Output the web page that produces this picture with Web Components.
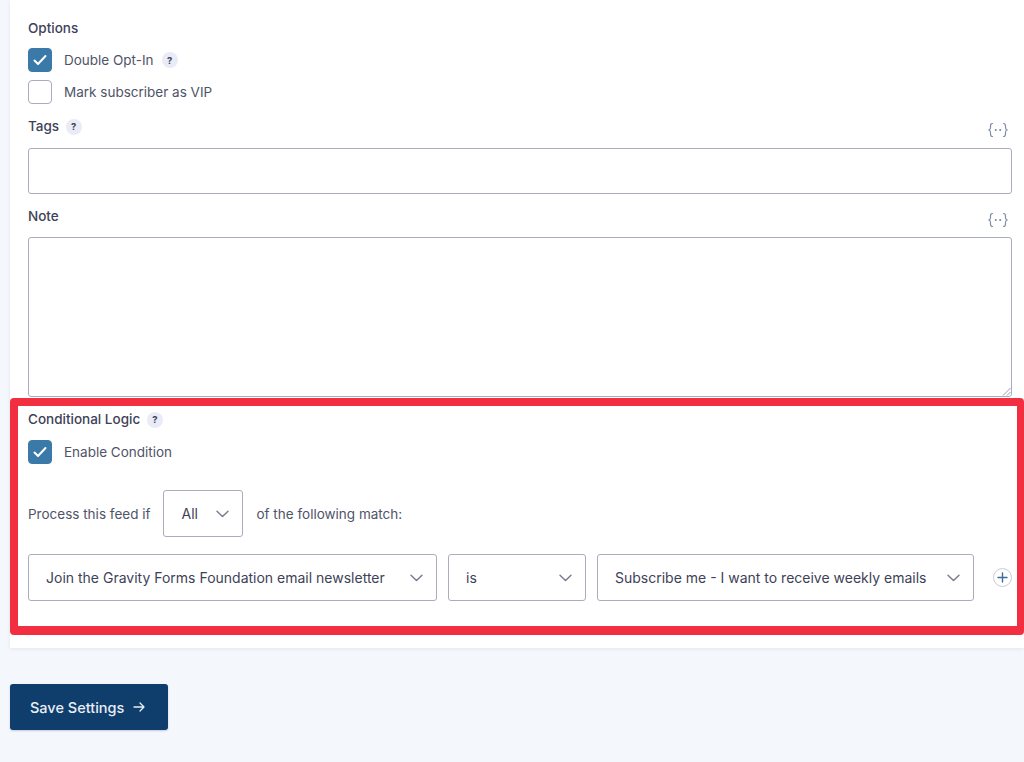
<!DOCTYPE html>
<html lang="en"><head><meta charset="utf-8"><title>Feed settings</title>
<style>
html,body{margin:0;padding:0;background:#f4f7fb;font-family:Inter,"Liberation Sans",sans-serif;color:#242748}
body{width:1024px;height:762px;overflow:hidden}
</style></head><body>
<feed-page>
  <settings-panel>
    <field-label style="height:16px;margin-top:20px">Options</field-label>
    <check-row checked style="margin-top:12px">Double Opt-In <help-dot style="margin-left:4px"></help-dot></check-row>
    <check-row style="margin-top:8px">Mark subscriber as VIP</check-row>
    <field-label merge style="margin-top:14px;height:30px">Tags <help-dot></help-dot></field-label>
    <text-box style="height:46px;margin-top:0"></text-box>
    <field-label merge style="margin-top:14px;height:29px">Note</field-label>
    <text-box resize style="height:160px"></text-box>
    <logic-box>
      <field-label strong>Conditional Logic <help-dot></help-dot></field-label>
      <check-row checked style="margin-top:12px">Enable Condition</check-row>
      <process-row style="margin-top:26px">
        <span>Process this feed if</span>
        <select-box style="width:80px">All</select-box>
        <span>of the following match:</span>
      </process-row>
      <rule-row style="margin-top:17px">
        <select-box style="width:409px">Join the Gravity Forms Foundation email newsletter</select-box>
        <select-box style="width:138px">is</select-box>
        <select-box style="width:377px">Subscribe me - I want to receive weekly emails</select-box>
        <add-button></add-button>
      </rule-row>
    </logic-box>
  </settings-panel>
  <save-button>Save Settings</save-button>
</feed-page>
<script>
function def(name, css, html){
  customElements.define(name, class extends HTMLElement{
    constructor(){super();this.attachShadow({mode:'open'}).innerHTML='<style>'+css+'</style>'+html;}
  });
}
def('feed-page',':host{display:block}','<slot></slot>');
def('settings-panel',`:host{display:block;box-sizing:border-box;margin-left:10px;width:1014px;height:648px;padding:0 12px 0 18px;background:#fff;box-shadow:0 1px 4px rgba(18,25,97,.08);display:flow-root}`,'<slot></slot>');
def('field-label',`:host{display:block;position:relative;font-size:13.5px;line-height:16px;font-weight:500;color:#3e4258}
 :host([strong]){color:#3e4258}
 .m{display:none;position:absolute;right:3px;top:-2px;width:22px;height:18px}
 :host([merge]) .m{display:block;top:3px}`,
 `<slot></slot><svg class="m" viewBox="0 0 22 18" fill="none" stroke="#7f8ea6" stroke-width="1.2" stroke-linecap="round" stroke-linejoin="round"><path d="M5.5 2.5c-2 0-2 1-2 2.500v1.800c0 1-.8 2-1.800 2.200 1 .2 1.800 1.200 1.800 2.200v1.800c0 1.500 0 2.500 2 2.500"/><path d="M16.500 2.500c2 0 2 1 2 2.500v1.800c0 1 .8 2 1.800 2.200-1 .2-1.800 1.200-1.800 2.200v1.800c0 1.500 0 2.500-2 2.500"/><circle cx="8.800" cy="9" r=".5"/><circle cx="13.200" cy="9" r=".5"/></svg>`);
def('help-dot',`:host{display:inline-flex;align-items:center;justify-content:center;width:16px;height:16px;border-radius:50%;background:#e9ebf6;color:#3e4258;font-size:9.500px;font-weight:700;vertical-align:1px;margin-left:3px}`,'?');
def('check-row',`:host{display:flex;align-items:center;height:24px;font-size:13.500px;color:#4f5468}
 .b{box-sizing:border-box;flex:none;width:24px;height:24px;border-radius:4px;border:1px solid #a9adbd;background:#fff;margin-right:12px;display:flex;align-items:center;justify-content:center}
 :host([checked]) .b{background:#3a79a8;border-color:#3a79a8}
 svg{display:none;width:14px;height:12px}
 :host([checked]) svg{display:block}
 .t{display:flex;align-items:center;gap:4px}`,
 `<span class="b"><svg viewBox="0 0 14 12" fill="none" stroke="#fff" stroke-width="2" stroke-linecap="round" stroke-linejoin="round"><path d="M1.500 6.500 5 10l7.500-8"/></svg></span><span class="t"><slot></slot></span>`);
def('text-box',`:host{display:block;box-sizing:border-box;width:984px;border:1px solid #a9adbd;border-radius:3px;background:#fff;position:relative}
 svg{display:none;position:absolute;right:0;bottom:0;width:9px;height:9px}
 :host([resize]) svg{display:block}`,
 `<svg viewBox="0 0 9 9" stroke="#9a9ea8" stroke-width="1" fill="none"><path d="M8.500 1 1 8.500M8.500 5 5 8.500"/></svg>`);
def('logic-box',`:host{display:block;box-sizing:border-box;margin:1px 0 0 -18px;width:1014px;height:237px;border:solid #f22e41;border-width:8px 7px 9px 8px;border-radius:4px;padding:5px 0 0 10px;background:#fff}`,'<slot></slot>');
def('process-row',`:host{display:flex;align-items:center;gap:13px;font-size:13.500px;color:#4f5468}`,'<slot></slot>');
def('rule-row',`:host{display:flex;align-items:center;gap:11px}`,'<slot></slot>');
def('select-box',`:host{display:flex;flex:none;box-sizing:border-box;align-items:center;justify-content:space-between;height:47px;padding:0 13px 0 17px;border:1px solid #a9adbd;border-radius:3px;background:#fff;font-size:14px;color:#3e4258;white-space:nowrap}
 svg{flex:none;width:13px;height:8px}`,
 `<slot></slot><svg viewBox="0 0 13 8" fill="none" stroke="#767b8c" stroke-width="1.400" stroke-linecap="round" stroke-linejoin="round"><path d="M1 1.200 6.500 6.500 12 1.200"/></svg>`);
def('add-button',`:host{display:flex;flex:none;box-sizing:border-box;width:19px;height:19px;border-radius:50%;border:1px solid #c9cdd8;align-items:center;justify-content:center;margin-left:8px;background:#fff}
 svg{width:11px;height:11px}`,
 `<svg viewBox="0 0 11 11" fill="none" stroke="#3a6f9c" stroke-width="1.400" stroke-linecap="round"><path d="M5.500 1v9M1 5.500h9"/></svg>`);
def('save-button',`:host{display:inline-flex;box-sizing:border-box;align-items:center;gap:9px;margin:36px 0 0 10px;height:46px;width:158px;padding-left:20px;background:#0f3d6c;border-radius:3px;color:#e8eef5;font-size:14.500px;font-weight:500;box-shadow:0 1px 2px rgba(18,25,97,.2)}
 svg{width:12px;height:10px}`,
 `<slot></slot><svg viewBox="0 0 12 10" fill="none" stroke="#e8eef5" stroke-width="1.300" stroke-linecap="round" stroke-linejoin="round"><path d="M1 5h10M7 1l4 4-4 4"/></svg>`);
</script>
</body></html>
